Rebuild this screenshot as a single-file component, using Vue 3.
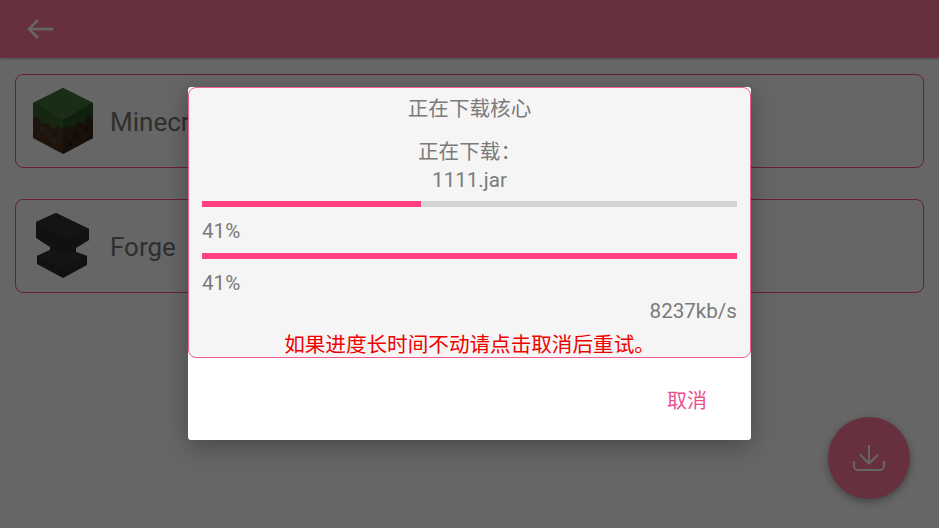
<template>
  <div class="page">
    <header class="app-bar">
      <svg class="back" width="28" height="22" viewBox="0 0 28 22" fill="none" stroke="currentColor" stroke-width="2.6">
        <path d="M27 11H3" />
        <path d="M12 2l-9 9 9 9" />
      </svg>
    </header>

    <main class="list">
      <div class="core-card">
        <svg class="core-icon" width="62" height="68" viewBox="0 0 62 68">
          <path d="M31 1L61 16V51L31 67L1 51V16Z" fill="#4a3323" />
          <path d="M61 16L31 33V67L61 51Z" fill="#3a2819" />
          <path d="M31 1L61 16L31 33L1 16Z" fill="#427238" />
          <path d="M1 16L31 33V42L26 39L21 42L16 36L10 37L6 30L1 31Z" fill="#355f2c" />
          <path d="M61 16L31 33V42L36 39L41 41L46 35L52 36L56 29L61 30Z" fill="#2b4e25" />
          <path d="M8 39l5 3v4l-5-3zM19 50l5 3v4l-5-3zM5 46l3 2v3l-3-2zM15 44l3 2v4l-3-2z" fill="#5c4330" />
          <path d="M41 48l5-3v4l-5 3zM51 42l5-3v4l-5 3zM36 56l4-2v4l-4 2z" fill="#2c1d12" />
        </svg>
        <span class="core-name">Minecraft</span>
      </div>
      <div class="core-card">
        <svg class="core-icon" width="62" height="68" viewBox="0 0 62 68">
          <path d="M24 1L57 17V28L44 36V40L55 44V53L31 66L5 52V44L18 38V35L4 26V10Z" fill="#2b2b2b" />
          <path d="M24 1L57 17L36 27L4 10Z" fill="#333333" />
          <path d="M5 44L18 38L44 40L55 44L31 56Z" fill="#333333" />
        </svg>
        <span class="core-name">Forge</span>
      </div>
    </main>

    <button class="fab">
      <svg width="32" height="26" viewBox="0 0 32 26" fill="none" stroke="currentColor" stroke-width="2">
        <path d="M16 0V18" />
        <path d="M7 9.5l9 9 9-9" />
        <path d="M1 16v5a4 4 0 0 0 4 4h22a4 4 0 0 0 4-4v-5" />
      </svg>
    </button>

    <div class="scrim">
      <div class="dialog">
        <div class="progress-card">
          <div class="title">正在下载核心</div>
          <div class="file-info">
            <div>正在下载：</div>
            <div>{{ fileName }}</div>
          </div>
          <div class="bar first"><div class="bar-fill" :style="{ width: filePercent + '%' }"></div></div>
          <div class="percent">{{ filePercent }}%</div>
          <div class="bar second"><div class="bar-fill" :style="{ width: '100%' }"></div></div>
          <div class="percent">{{ filePercent }}%</div>
          <div class="speed">{{ speed }}</div>
          <div class="warning">如果进度长时间不动请点击取消后重试。</div>
        </div>
        <div class="dialog-actions">
          <button class="cancel">取消</button>
        </div>
      </div>
    </div>
  </div>
</template>

<script setup>
const fileName = '1111.jar'
const filePercent = 41
const speed = '8237kb/s'
</script>

<style>
html,
body {
  margin: 0;
  overflow: hidden;
}
</style>

<style scoped>
.page {
  position: relative;
  width: 939px;
  height: 528px;
  background: #ffffff;
  overflow: hidden;
  font-family: Roboto, "Noto Sans CJK SC", sans-serif;
}

.app-bar {
  height: 58px;
  background: #ff789d;
  display: flex;
  align-items: center;
  padding-left: 26px;
  box-shadow: 0 1px 3px rgba(0, 0, 0, 0.25);
}

.back {
  color: #ffffff;
}

.list {
  padding: 16px 15px;
  display: flex;
  flex-direction: column;
  gap: 31px;
}

.core-card {
  height: 94px;
  box-sizing: border-box;
  border: 1px solid #ff4f85;
  border-radius: 8px;
  display: flex;
  align-items: center;
  padding-left: 16px;
}

.core-icon {
  flex: none;
}

.core-name {
  margin-left: 16px;
  padding-top: 2px;
  font-size: 26px;
  color: #757575;
}

.fab {
  position: absolute;
  left: 828px;
  top: 417px;
  width: 82px;
  height: 82px;
  border: none;
  border-radius: 50%;
  background: #ff789d;
  color: #ffffff;
  display: flex;
  align-items: center;
  justify-content: center;
  box-shadow: 0 3px 8px rgba(0, 0, 0, 0.35);
  padding: 0;
}

.scrim {
  position: absolute;
  inset: 0;
  background: rgba(0, 0, 0, 0.6);
  display: flex;
  align-items: center;
  justify-content: center;
}

.dialog {
  width: 563px;
  height: 353px;
  margin-top: -1px;
  background: #ffffff;
  border-radius: 3px;
  box-shadow: 0 6px 24px rgba(0, 0, 0, 0.3);
}

.progress-card {
  height: 271px;
  box-sizing: border-box;
  background: #f5f5f5;
  border: 1px solid #ee5f90;
  border-radius: 8px;
  padding: 7px 13px 0;
  font-size: 20.6px;
  line-height: 28px;
  color: #7a7a7a;
}

.title,
.file-info,
.warning {
  text-align: center;
}

.file-info {
  margin-top: 15px;
}

.bar {
  height: 6px;
  background: #d3d3d3;
}

.bar.first {
  margin-top: 7px;
}

.bar.second {
  margin-top: 8px;
}

.bar-fill {
  height: 100%;
  background: #ff4081;
}

.percent {
  margin-top: 10px;
}

.bar.second + .percent {
  margin-top: 10px;
}

.speed {
  text-align: right;
}

.warning {
  margin-top: 6px;
  color: #f00000;
}

.dialog-actions {
  height: 82px;
  display: flex;
  align-items: center;
  justify-content: flex-end;
  padding-right: 44px;
}

.cancel {
  border: none;
  background: none;
  padding: 0;
  font: inherit;
  font-size: 20px;
  color: #ec4f8f;
}
</style>
